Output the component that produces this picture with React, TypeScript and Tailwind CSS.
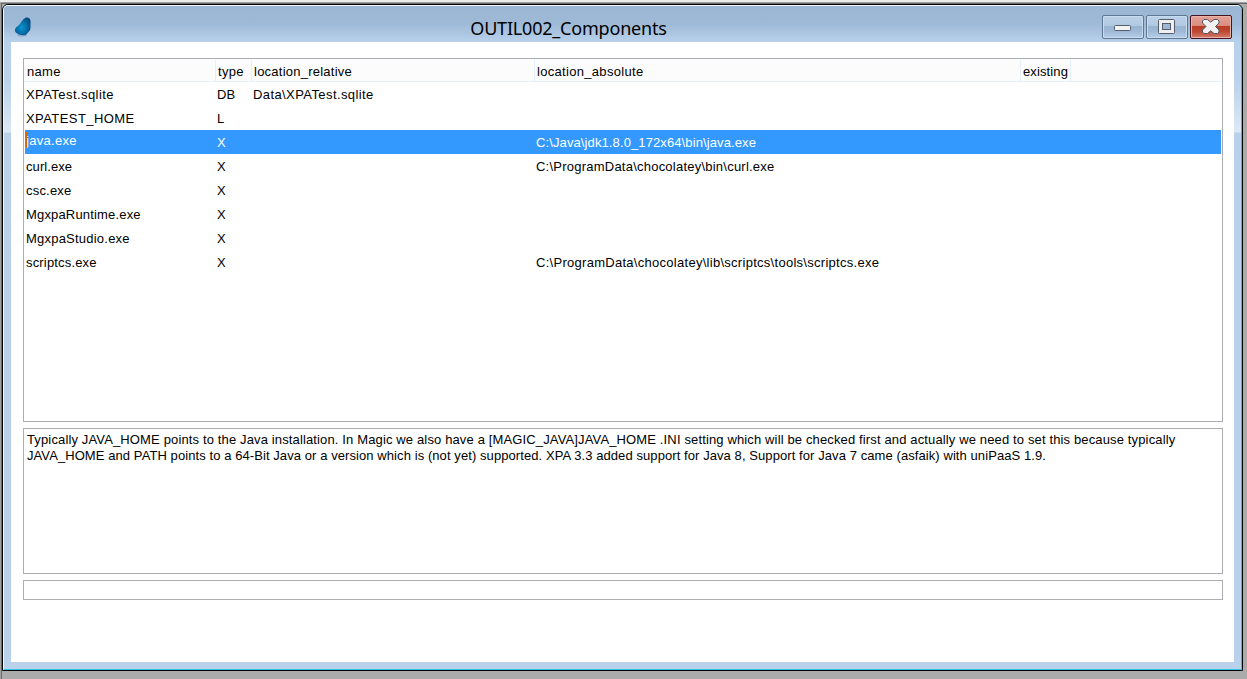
import type { ReactNode } from "react";

type Cell = { text: string; tracking: string };
type Row = { name: Cell; type: string; relative?: Cell; absolute?: Cell };

const rows: Row[] = [
  {
    name: { text: "XPATest.sqlite", tracking: "tracking-[0.43px]" },
    type: "DB",
    relative: { text: "Data\\XPATest.sqlite", tracking: "tracking-[0.41px]" },
  },
  { name: { text: "XPATEST_HOME", tracking: "tracking-[0.43px]" }, type: "L" },
  {
    name: { text: "java.exe", tracking: "tracking-[0.3px]" },
    type: "X",
    absolute: { text: "C:\\Java\\jdk1.8.0_172x64\\bin\\java.exe", tracking: "tracking-[0.11px]" },
  },
  {
    name: { text: "curl.exe", tracking: "tracking-[0.08px]" },
    type: "X",
    absolute: { text: "C:\\ProgramData\\chocolatey\\bin\\curl.exe", tracking: "tracking-[0.23px]" },
  },
  { name: { text: "csc.exe", tracking: "tracking-[0.2px]" }, type: "X" },
  { name: { text: "MgxpaRuntime.exe", tracking: "tracking-[0.17px]" }, type: "X" },
  { name: { text: "MgxpaStudio.exe", tracking: "tracking-[0.22px]" }, type: "X" },
  {
    name: { text: "scriptcs.exe", tracking: "tracking-[0.17px]" },
    type: "X",
    absolute: { text: "C:\\ProgramData\\chocolatey\\lib\\scriptcs\\tools\\scriptcs.exe", tracking: "tracking-[0.28px]" },
  },
];

const SELECTED = 2;

function AppIcon() {
  return (
    <svg width="20" height="22" viewBox="0 0 20 22" className="block">
      <defs>
        <radialGradient id="drop" cx="0.42" cy="0.55" r="0.62">
          <stop offset="0" stopColor="#0b93cb" />
          <stop offset="0.5" stopColor="#0672ac" />
          <stop offset="1" stopColor="#044a82" />
        </radialGradient>
      </defs>
      <ellipse cx="8" cy="19.2" rx="5" ry="1.3" fill="#7f9dbd" opacity="0.6" />
      <path
        d="M11.4 1.8C13.9 0.8 16.4 2.2 16.5 5V12C16.4 14.6 14.6 15.4 13.4 17.2C12.2 19 10.4 19.4 8.4 19.3C6.4 19.3 4.8 18.5 3.2 17.6C1.4 16.6 1 15.8 1 14.3C1 11.4 3.2 10.6 5.4 8.4C7.6 6 9 2.9 11.4 1.8Z"
        fill="url(#drop)"
      />
    </svg>
  );
}

function CaptionButton({ children, danger = false }: { children: ReactNode; danger?: boolean }) {
  return (
    <div
      className={
        danger
          ? "h-6 w-[42px] rounded-[2px] border border-[#431422] bg-[linear-gradient(to_bottom,#e4a397_0,#d98b7d_45%,#b83c25_46%,#bd4832_70%,#d47c6b_100%)] shadow-[inset_0_0_0_1px_#e9b3a9]"
          : "h-6 w-[42px] rounded-[2px] border border-[#5f7791] bg-[linear-gradient(to_bottom,#bdd2e8_0,#b0c8e1_45%,#98b3d0_46%,#a0bad6_70%,#b6cee7_100%)] shadow-[inset_0_0_0_1px_#c8dcf0]"
      }
    >
      {children}
    </div>
  );
}

function TitleBar() {
  return (
    <header className="flex h-9 shrink-0 items-start bg-[linear-gradient(to_bottom,#9bb6d3_0,#9fbad7_50%,#b8d1eb_100%)] pl-[10px]">
      <div className="w-[100px] pt-[10px]">
        <AppIcon />
      </div>
      <h1 className="flex-1 pt-[9px] pr-[79px] text-center font-['Noto_Sans',sans-serif] text-[18px] leading-[26px] tracking-[-0.2px] whitespace-nowrap text-black">
        OUTIL002_Components
      </h1>
      <div className="flex gap-[2px] pt-[9px] pr-[9px]">
        <CaptionButton>
          <svg width="40" height="22" className="block">
            <rect x="11.5" y="9.5" width="16" height="5" rx="1" fill="#f3f3f3" stroke="#555c6b" />
          </svg>
        </CaptionButton>
        <CaptionButton>
          <svg width="40" height="22" className="block">
            <rect x="11.5" y="3.5" width="16" height="14" rx="1" fill="#efefef" stroke="#555c6b" />
            <rect x="15.5" y="7.5" width="8" height="6" fill="#9db8d4" stroke="#555c6b" />
          </svg>
        </CaptionButton>
        <CaptionButton danger>
          <svg width="40" height="22" className="block">
            <path
              d="M13 3.5H16.5L19.7 6.2L23 3.5H26.5L28 5V7L24.5 10.5L28 14V16L26.5 17.5H23L19.7 14.8L16.5 17.5H13L11.5 16V14L15 10.5L11.5 7V5Z"
              fill="#f1f1f1"
              stroke="#535666"
              strokeLinejoin="round"
            />
          </svg>
        </CaptionButton>
      </div>
    </header>
  );
}

function HeaderCell({ children, className }: { children?: ReactNode; className: string }) {
  return <div className={`h-[22px] shrink-0 border-r border-[#e3effb] leading-[24px] ${className}`}>{children}</div>;
}

function ComponentTable() {
  return (
    <section className="h-[364px] border border-[#abadb3] bg-white">
      <div className="mr-px flex h-[23px] border-b border-[#e3effb] bg-[#fcfcfc] pt-px">
        <HeaderCell className="w-48 pl-[3px] tracking-[0.3px]">name</HeaderCell>
        <HeaderCell className="w-9 pl-[2px] tracking-[0.3px]">type</HeaderCell>
        <HeaderCell className="w-[283px] pl-[2px] tracking-[0.24px]">location_relative</HeaderCell>
        <HeaderCell className="w-[486px] pl-[2px] tracking-[0.31px]">location_absolute</HeaderCell>
        <HeaderCell className="w-[50px] pl-[2px] tracking-[0.12px]">existing</HeaderCell>
      </div>
      {rows.map((row, i) => {
        const selected = i === SELECTED;
        return (
          <div
            key={row.name.text}
            className={`mx-px flex h-6 leading-[25px] ${selected ? "bg-[#3399ff] text-white" : ""}`}
          >
            <div className="relative w-[191px] shrink-0 pl-px">
              {selected && <span className="absolute top-[2px] left-px h-[16px] w-px bg-[#cc6600]" />}
              <span className={`block ${row.name.tracking} ${selected ? "leading-[22px]" : ""}`}>{row.name.text}</span>
            </div>
            <div className="w-9 shrink-0 pl-px">{row.type}</div>
            <div className={`w-[283px] shrink-0 pl-px ${row.relative?.tracking ?? ""}`}>{row.relative?.text}</div>
            <div className={`shrink-0 pl-px ${row.absolute?.tracking ?? ""}`}>{row.absolute?.text}</div>
          </div>
        );
      })}
    </section>
  );
}

export default function App() {
  return (
    <div className="flex h-[679px] w-[1247px] flex-col overflow-hidden bg-[#ababab] font-['Liberation_Sans',Arial,sans-serif] text-[13px] text-black">
      <div className="h-[2px] shrink-0 bg-[#ececec]" />
      <div className="flex h-[677px] flex-col border-t border-l border-[#a0a0a0]">
        <div className="flex h-[676px] flex-col border-t border-l border-[#696969]">
          <div className="flex h-[667px] w-[1241px] flex-col overflow-hidden rounded-t-[6px] border border-black bg-[#b9d1ea]">
            <div className="flex flex-1 flex-col overflow-hidden rounded-t-[5px] border border-t-[#f3f7fb] border-r-[#35c5e4] border-b-[#35c5e4] border-l-[#f3f7fb]">
              <TitleBar />
              <div className="flex flex-1 bg-[linear-gradient(to_bottom,#b8d1eb_0,#bbd2eb_40px,#dce8f5_90px,#b9d1ea_91px)] px-[7px] pb-[7px]">
                <main className="flex flex-1 flex-col gap-[6px] bg-white px-3 pt-4 pr-[11px]">
                  <ComponentTable />
                  <section className="h-[146px] border border-[#abadb3] pt-[3px] pl-[3px] leading-4 whitespace-nowrap">
                    <p className="tracking-[0.138px]">
                      Typically JAVA_HOME points to the Java installation. In Magic we also have a [MAGIC_JAVA]JAVA_HOME .INI setting which will be checked first and actually we need to set this because typically
                    </p>
                    <p className="tracking-[0.08px]">
                      JAVA_HOME and PATH points to a 64-Bit Java or a version which is (not yet) supported. XPA 3.3 added support for Java 8, Support for Java 7 came (asfaik) with uniPaaS 1.9.
                    </p>
                  </section>
                  <div className="h-5 border border-[#abadb3]" />
                </main>
              </div>
            </div>
          </div>
        </div>
      </div>
    </div>
  );
}
